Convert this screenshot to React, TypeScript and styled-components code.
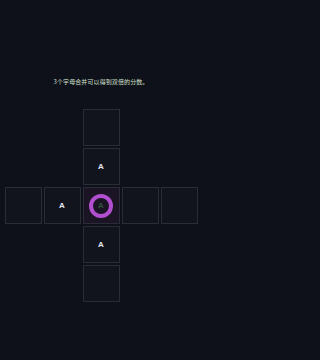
import styled, { createGlobalStyle } from "styled-components";

type Slot = { row: number; col: number; letter?: string; active?: boolean };

const slots: Slot[] = [
  { row: 1, col: 3 },
  { row: 2, col: 3, letter: "A" },
  { row: 3, col: 1 },
  { row: 3, col: 2, letter: "A" },
  { row: 3, col: 3, letter: "A", active: true },
  { row: 3, col: 4 },
  { row: 3, col: 5 },
  { row: 4, col: 3, letter: "A" },
  { row: 5, col: 3 },
];

function App() {
  return (
    <>
      <GlobalStyle />
      <Screen>
        <Hint>3个字母合并可以得到双倍的分数。</Hint>
        <Board>
          {slots.map((s) => (
            <Cell key={`${s.row}-${s.col}`} $row={s.row} $col={s.col} $active={s.active}>
              {s.active ? (
                <Ring>
                  <Letter $dim>{s.letter}</Letter>
                </Ring>
              ) : (
                s.letter && <Letter>{s.letter}</Letter>
              )}
            </Cell>
          ))}
        </Board>
      </Screen>
    </>
  );
}

export default App;

const GlobalStyle = createGlobalStyle`
  html, body {
    margin: 0;
    padding: 0;
    background: #0f111a;
  }
`;

const Screen = styled.div`
  width: 202px;
  height: 360px;
  background: #0f111a;
  font-family: "Noto Sans", "Noto Sans CJK SC", sans-serif;
  display: flex;
  flex-direction: column;
  align-items: center;
  padding-top: 77px;
  box-sizing: border-box;
`;

const Hint = styled.div`
  font-size: 6px;
  line-height: 10px;
  color: #d4e2cf;
  letter-spacing: 0.1px;
  font-family: "Noto Sans CJK SC", sans-serif;
`;

const Board = styled.div`
  margin-top: 22px;
  display: grid;
  grid-template-columns: repeat(5, 37px);
  grid-template-rows: repeat(5, 37px);
  gap: 2px;
`;

const Cell = styled.div<{ $row: number; $col: number; $active?: boolean }>`
  grid-row: ${(p) => p.$row};
  grid-column: ${(p) => p.$col};
  border: 1px solid #2a2d38;
  background: ${(p) => (p.$active ? "#1a1424" : "#12141d")};
  display: flex;
  align-items: center;
  justify-content: center;
`;

const Ring = styled.div`
  width: 24px;
  height: 24px;
  box-sizing: border-box;
  border-radius: 50%;
  border: 4px solid #b24fd0;
  display: flex;
  align-items: center;
  justify-content: center;
`;

const Letter = styled.span<{ $dim?: boolean }>`
  font-family: "Liberation Sans", Arial, sans-serif;
  font-weight: 700;
  font-size: 8px;
  color: ${(p) => (p.$dim ? "#2e5238" : "#e6e8ee")};
`;
